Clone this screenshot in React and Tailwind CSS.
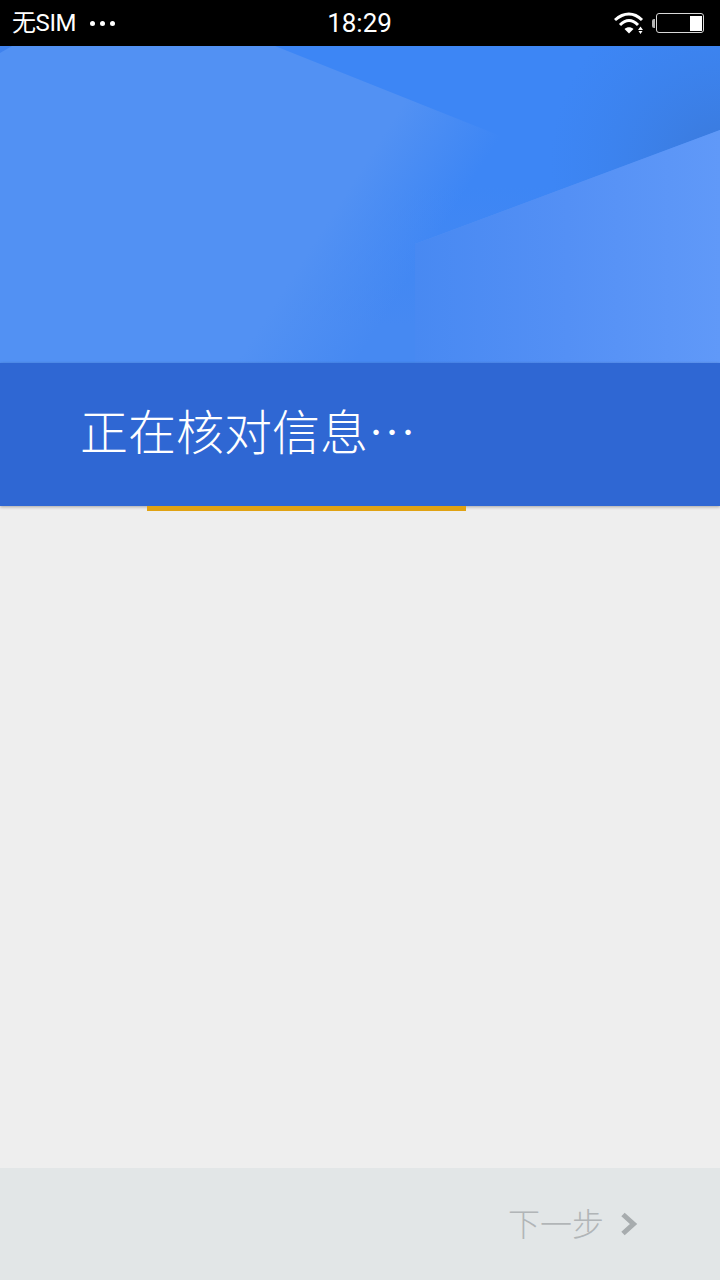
export default function App() {
  return (
    <div className="flex h-[1280px] w-[720px] flex-col overflow-hidden bg-[#eeeeee] font-['Roboto','Noto_Sans_CJK_SC',sans-serif]">
      <header className="flex h-[46px] shrink-0 items-center justify-between bg-black pl-3 pr-4 text-white">
        <div className="flex w-[200px] items-center gap-[14px]">
          <span className="text-[24px] leading-none tracking-[-0.4px]">无SIM</span>
          <span className="flex gap-[5px]">
            <i className="size-[5px] rounded-full bg-white" />
            <i className="size-[5px] rounded-full bg-white" />
            <i className="size-[5px] rounded-full bg-white" />
          </span>
        </div>
        <span className="ml-[3px] text-[26px] leading-none">18:29</span>
        <div className="flex w-[200px] items-center justify-end">
          <svg width="38" height="24" viewBox="0 0 38 24" className="mr-[1px]">
            <path d="M2 9 C 11 1 21 1 29 9" fill="none" stroke="#fff" strokeWidth="3" />
            <path d="M7 14 C 13 8 19 8 25 14" fill="none" stroke="#fff" strokeWidth="3" />
            <path d="M11.500 18 C 14 15.500 18 15.500 20.500 18 L16 22.500 Z" fill="#fff" />
            <path d="M25 20 L27.500 16.500 L30 20 Z M25.500 21 H29.500 L27.500 24 Z" fill="#fff" transform="translate(0 -1)" />
          </svg>
          <span className="h-[9px] w-[3px] rounded-l-[2px] bg-white/70" />
          <span className="ml-[1px] flex h-[20px] w-[48px] justify-end rounded-[3px] border border-[#d8d8d8] p-[1.5px]">
            <span className="h-full w-[12px] bg-white" />
          </span>
        </div>
      </header>

      <section className="relative h-[317px] shrink-0 overflow-hidden bg-[#5291f3]">
        <svg className="absolute inset-0" width="720" height="317" viewBox="0 0 720 317">
          <defs>
            <linearGradient id="wedge" x1="0" x2="0" y1="140" y2="280" gradientUnits="userSpaceOnUse">
              <stop offset="0" stopColor="#3d86f5" />
              <stop offset="1" stopColor="#4689f2" />
            </linearGradient>
            <linearGradient id="panel" x1="390" y1="78" x2="474" y2="132" gradientUnits="userSpaceOnUse">
              <stop offset="0" stopColor="#5291f3" />
              <stop offset="1" stopColor="#5291f3" stopOpacity="0" />
            </linearGradient>
            <radialGradient id="shade" cx="720" cy="115" r="170" gradientUnits="userSpaceOnUse">
              <stop offset="0" stopColor="#3a77d6" stopOpacity="0.85" />
              <stop offset="1" stopColor="#3a7fe6" stopOpacity="0" />
            </radialGradient>
            <linearGradient id="light" x1="415" x2="720" y1="0" y2="0" gradientUnits="userSpaceOnUse">
              <stop offset="0" stopColor="#4889f2" />
              <stop offset="0.5" stopColor="#5490f5" />
              <stop offset="1" stopColor="#6099f8" />
            </linearGradient>
          </defs>
          <path d="M275 0 H720 V84 L415 198 V317 H230 Z" fill="url(#wedge)" />
          <path d="M275 0 H720 V84 L415 198 V56 Z" fill="url(#shade)" />
          <path d="M0 0 H275 L598 129 L415 198 V317 H0 Z" fill="url(#panel)" />
          <path d="M720 84 V317 H415 V198 Z" fill="url(#light)" />
          <path d="M0 0 H12 L0 7 Z" fill="#3f82ee" />
        </svg>
      </section>

      <div className="relative z-10 flex h-[143px] shrink-0 items-start bg-[#2f67d3] pl-[80px] pt-[38px] shadow-[0_1px_3px_rgba(0,0,0,0.3)]">
        <h1 className="font-['Noto_Sans_CJK_SC',sans-serif] text-[48px] leading-[56px] font-light text-white">正在核对信息…</h1>
        <div className="absolute left-[147px] top-[143px] h-[5px] w-[319px] bg-[#e0a213]" />
      </div>

      <main className="flex-1 bg-[#eeeeee]" />

      <footer className="flex h-[112px] shrink-0 items-center justify-end gap-[16px] bg-[#e2e6e7] pr-[82px]">
        <span className="pb-[4px] font-['Noto_Sans_CJK_SC',sans-serif] text-[32px] leading-none font-light text-[#b1b5b7]">下一步</span>
        <svg width="18" height="24" viewBox="0 0 18 24">
          <path d="M3 2.500 L13.500 12 L3 21.500" fill="none" stroke="#a7acae" strokeWidth="5" />
        </svg>
      </footer>
    </div>
  );
}
